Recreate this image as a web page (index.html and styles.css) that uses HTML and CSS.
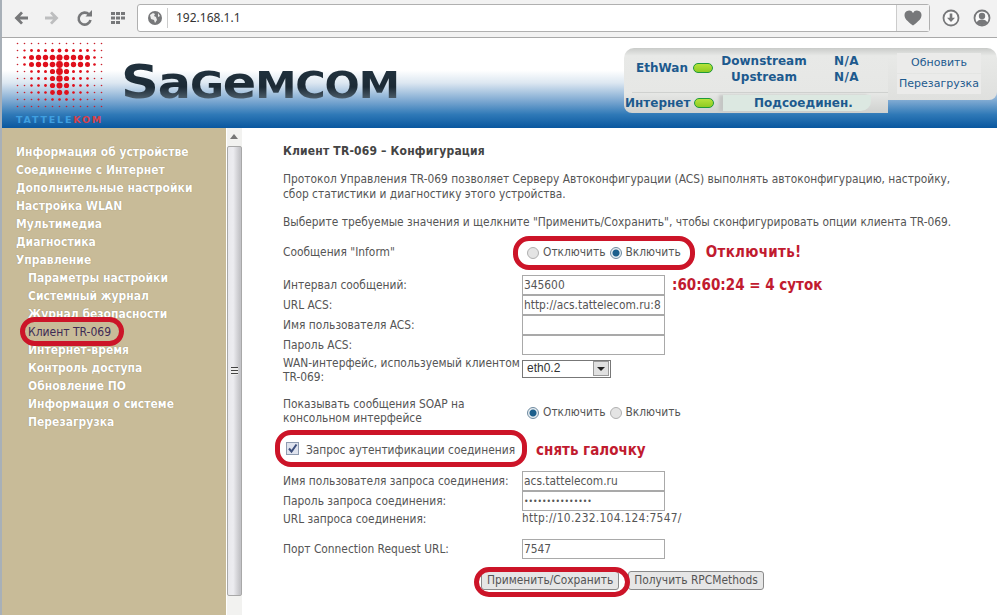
FILE: index.html
```html
<!DOCTYPE html>
<html lang="ru">
<head>
    <meta charset="UTF-8">
    <meta name="viewport" content="width=device-width, initial-scale=1.0">
    <title>Клиент TR-069</title>
    <link rel="stylesheet" href="styles.css">
</head>
<body>
    <div class="toolbar">
        <svg class="nav-icon nav-back" width="20" height="20" viewBox="0 0 20 20"><path d="M16 8.500H8l3-3.200L9 3.500 2.500 10 9 16.500l2-1.800-3-3.200h8z" fill="#77787a"/></svg>
        <svg class="nav-icon" width="20" height="20" viewBox="0 0 20 20"><path d="M3 8.500h8L8 5.300l2-1.800 6.500 6.500-6.500 6.500-2-1.800 3-3.200H3z" fill="#bdbebf"/></svg>
        <svg class="nav-icon" width="20" height="20" viewBox="0 0 20 20"><path d="M14 6.500A6 6 0 1 0 15.500 12" fill="none" stroke="#77787a" stroke-width="2.600"/><path d="M10.500 8.500h6.500V2z" fill="#77787a"/></svg>
        <svg class="nav-icon" width="20" height="20" viewBox="0 0 20 20"><path d="M3 4h4v3H3zM8 4h4v3H8zM13 4h4v3h-4zM3 8.500h4v3H3zM8 8.500h4v3H8zM13 8.500h4v3h-4zM3 13h4v3H3zM8 13h4v3H8z" fill="#77787a"/></svg>
        <div class="address">
            <svg class="globe" width="16" height="16" viewBox="0 0 16 16"><circle cx="8" cy="8" r="7" fill="#77787a"/><path d="M3 5l3-2 2 1-1 2 2 1 1 3-2 3-1-3-3-1zM11 3l2 3-2 1z" fill="#eee"/></svg>
            <span class="url">192.168.1.1</span>
            <span class="star">
                <svg width="18" height="16" viewBox="0 0 18 16"><path d="M9 15.500C3 11 .5 8.500.5 5A4.500 4.500 0 0 1 9 3a4.500 4.500 0 0 1 8.500 2c0 3.500-2.500 6-8.500 10.500z" fill="#77787a"/></svg>
            </span>
        </div>
        <svg class="tool-icon tool-first" width="18" height="18" viewBox="0 0 18 18"><circle cx="9" cy="9" r="7.500" fill="#fafafa" stroke="#77787a" stroke-width="1.800"/><path d="M7.700 4.500h2.600v4.200H13L9 13 5 8.700h2.700z" fill="#77787a"/></svg>
        <svg class="tool-icon" width="18" height="18" viewBox="0 0 18 18"><circle cx="9" cy="9" r="7.500" fill="#fafafa" stroke="#77787a" stroke-width="1.800"/><circle cx="9" cy="7" r="3.200" fill="#77787a"/><path d="M3.500 14c1-3 3-3.500 5.500-3.500s4.500.5 5.500 3.500A7 7 0 0 1 9 16a7 7 0 0 1-5.500-2z" fill="#77787a"/></svg>
    </div>

    <div class="header">
        <div class="logo">
            <svg width="90" height="68" viewBox="0 0 90 68">
                <defs>
                    <pattern id="dots" width="7" height="7" patternUnits="userSpaceOnUse"><circle cx="1.500" cy="1.500" r="0.800" fill="#c8202c"/></pattern>
                </defs>
                <rect width="90" height="68" fill="url(#dots)"/>
                <g fill="#e0101c">
                    <circle cx="15.500" cy="8.500" r="1.400"/><circle cx="22.500" cy="8.500" r="1.500"/><circle cx="29.500" cy="8.500" r="1.500"/><circle cx="36.500" cy="8.500" r="1.700"/><circle cx="43.500" cy="8.500" r="1.900"/><circle cx="50.500" cy="8.500" r="1.700"/><circle cx="57.500" cy="8.500" r="1.500"/><circle cx="64.500" cy="8.500" r="1.500"/><circle cx="71.500" cy="8.500" r="1.400"/><circle cx="8.500" cy="8.500" r="1.100"/><circle cx="78.500" cy="8.500" r="1.100"/>
                    <circle cx="15.500" cy="15.500" r="2.500"/><circle cx="22.500" cy="15.500" r="2.700"/><circle cx="29.500" cy="15.500" r="2.700"/><circle cx="36.500" cy="15.500" r="2.800"/><circle cx="43.500" cy="15.500" r="3.100"/><circle cx="50.500" cy="15.500" r="2.800"/><circle cx="57.500" cy="15.500" r="2.700"/><circle cx="64.500" cy="15.500" r="2.700"/><circle cx="71.500" cy="15.500" r="2.500"/><circle cx="8.500" cy="15.500" r="1.300"/><circle cx="78.500" cy="15.500" r="1.300"/>
                    <circle cx="15.500" cy="22.500" r="2.500"/><circle cx="22.500" cy="22.500" r="2.700"/><circle cx="29.500" cy="22.500" r="2.700"/><circle cx="36.500" cy="22.500" r="2.800"/><circle cx="43.500" cy="22.500" r="3.400"/><circle cx="50.500" cy="22.500" r="2.800"/><circle cx="57.500" cy="22.500" r="2.700"/><circle cx="64.500" cy="22.500" r="2.700"/><circle cx="71.500" cy="22.500" r="2.500"/><circle cx="8.500" cy="22.500" r="1.300"/><circle cx="78.500" cy="22.500" r="1.300"/>
                    <circle cx="15.500" cy="29.500" r="1.300"/><circle cx="22.500" cy="29.500" r="1.400"/><circle cx="29.500" cy="29.500" r="1.500"/><circle cx="36.500" cy="29.500" r="2.600"/><circle cx="43.500" cy="29.500" r="3.400"/><circle cx="50.500" cy="29.500" r="2.600"/><circle cx="57.500" cy="29.500" r="1.500"/><circle cx="64.500" cy="29.500" r="1.400"/><circle cx="71.500" cy="29.500" r="1.300"/>
                    <circle cx="15.500" cy="36.500" r="1.300"/><circle cx="22.500" cy="36.500" r="1.400"/><circle cx="29.500" cy="36.500" r="1.500"/><circle cx="36.500" cy="36.500" r="2.600"/><circle cx="43.500" cy="36.500" r="3.200"/><circle cx="50.500" cy="36.500" r="2.600"/><circle cx="57.500" cy="36.500" r="1.500"/><circle cx="64.500" cy="36.500" r="1.400"/><circle cx="71.500" cy="36.500" r="1.300"/>
                    <circle cx="15.500" cy="43.500" r="1.200"/><circle cx="22.500" cy="43.500" r="1.300"/><circle cx="29.500" cy="43.500" r="1.400"/><circle cx="36.500" cy="43.500" r="2.600"/><circle cx="43.500" cy="43.500" r="3"/><circle cx="50.500" cy="43.500" r="2.600"/><circle cx="57.500" cy="43.500" r="1.400"/><circle cx="64.500" cy="43.500" r="1.300"/><circle cx="71.500" cy="43.500" r="1.200"/>
                    <circle cx="15.500" cy="50.500" r="1.100"/><circle cx="22.500" cy="50.500" r="1.200"/><circle cx="29.500" cy="50.500" r="1.300"/><circle cx="36.500" cy="50.500" r="2.400"/><circle cx="43.500" cy="50.500" r="2.700"/><circle cx="50.500" cy="50.500" r="2.400"/><circle cx="57.500" cy="50.500" r="1.300"/><circle cx="64.500" cy="50.500" r="1.200"/><circle cx="71.500" cy="50.500" r="1.100"/>
                    <circle cx="22.500" cy="57.500" r="1"/><circle cx="29.500" cy="57.500" r="1"/><circle cx="36.500" cy="57.500" r="1.300"/><circle cx="43.500" cy="57.500" r="1.300"/><circle cx="50.500" cy="57.500" r="1.300"/><circle cx="57.500" cy="57.500" r="1"/><circle cx="64.500" cy="57.500" r="1"/>
                </g>
            </svg>
            <div class="brand-small">TATTELE<span class="brand-kom">KOM</span></div>
        </div>
        <div class="wordmark"><span class="wm-s">S</span><span class="wm-low">a</span>G<span class="wm-low">e</span>MCOM</div>

        <div class="status">
            <div class="status-left">
                <div class="status-top">
                    <div class="eth">EthWan <span class="led"></span></div>
                    <div class="streams">
                        <div>Downstream</div>
                        <div>Upstream</div>
                    </div>
                    <div class="na">
                        <div>N/A</div>
                        <div>N/A</div>
                    </div>
                </div>
                <div class="status-bottom">
                    <div class="inet">Интернет <span class="led"></span></div>
                    <div class="connected">Подсоединен.</div>
                </div>
            </div>
            <div class="status-right">
                <div class="status-btn">Обновить</div>
                <div class="status-btn">Перезагрузка</div>
            </div>
        </div>
    </div>

    <div class="main">
        <div class="sidebar">
            <a href="#">Информация об устройстве</a>
            <a href="#">Соединение с Интернет</a>
            <a href="#">Дополнительные настройки</a>
            <a href="#">Настройка WLAN</a>
            <a href="#">Мультимедиа</a>
            <a href="#">Диагностика</a>
            <a href="#">Управление</a>
            <a class="sub" href="#">Параметры настройки</a>
            <a class="sub" href="#">Системный журнал</a>
            <a class="sub" href="#">Журнал безопасности</a>
            <a class="sub active" href="#">Клиент TR-069</a>
            <a class="sub" href="#">Интернет-время</a>
            <a class="sub" href="#">Контроль доступа</a>
            <a class="sub" href="#">Обновление ПО</a>
            <a class="sub" href="#">Информация о системе</a>
            <a class="sub" href="#">Перезагрузка</a>
            <div class="oval oval-menu"></div>
        </div>

        <div class="scrollbar">
            <div class="scroll-up"></div>
            <div class="scroll-thumb"><div class="grip"></div></div>
            <div class="scroll-down"></div>
        </div>

        <div class="content">
            <h1>Клиент TR-069 – Конфигурация</h1>
            <p class="intro">Протокол Управления TR-069 позволяет Серверу Автоконфигурации (ACS) выполнять автоконфигурацию, настройку, сбор статистики и диагностику этого устройства.</p>
            <p class="hint">Выберите требуемые значения и щелкните "Применить/Сохранить", чтобы сконфигурировать опции клиента TR-069.</p>

            <form>
                <div class="row row-inform">
                    <label>Сообщения "Inform"</label>
                    <div class="radios">
                        <span class="radio"></span> Отключить <span class="radio on"></span> Включить
                    </div>
                    <span class="note note-off">Отключить!</span>
                </div>

                <div class="row row-input">
                    <label>Интервал сообщений:</label>
                    <input type="text" value="345600">
                    <span class="note note-time">:60:60:24 = 4 суток</span>
                </div>
                <div class="row row-input">
                    <label>URL ACS:</label>
                    <input type="text" value="http://acs.tattelecom.ru:8">
                </div>
                <div class="row row-input">
                    <label>Имя пользователя ACS:</label>
                    <input type="text">
                </div>
                <div class="row row-input">
                    <label>Пароль ACS:</label>
                    <input type="text">
                </div>
                <div class="row row-wan">
                    <label>WAN-интерфейс, используемый клиентом<br>TR-069:</label>
                    <div class="select">eth0.2<span class="select-arrow"></span></div>
                </div>
                <div class="row row-soap">
                    <label>Показывать сообщения SOAP на консольном интерфейсе</label>
                    <div class="radios">
                        <span class="radio on"></span> Отключить <span class="radio"></span> Включить
                    </div>
                </div>
                <div class="row row-check">
                    <span class="checkbox">
                        <svg width="11" height="11" viewBox="0 0 11 11"><path d="M2 5.500l2.500 3L9.500 1.500" fill="none" stroke="#3d4f7c" stroke-width="2"/></svg>
                    </span>
                    <span class="check-label">Запрос аутентификации соединения</span>
                    <span class="note note-check">снять галочку</span>
                </div>
                <div class="row row-input">
                    <label>Имя пользователя запроса соединения:</label>
                    <input type="text" value="acs.tattelecom.ru">
                </div>
                <div class="row row-input">
                    <label>Пароль запроса соединения:</label>
                    <input class="pass" type="password" value="passwordpasswor">
                </div>
                <div class="row row-url">
                    <label>URL запроса соединения:</label>
                    <span class="url-value">http://10.232.104.124:7547/</span>
                </div>
                <div class="row row-port">
                    <label>Порт Connection Request URL:</label>
                    <input type="text" value="7547">
                </div>
                <div class="buttons">
                    <button type="button">Применить/Сохранить</button>
                    <button type="button" class="btn-rpc">Получить RPCMethods</button>
                </div>
            </form>

            <div class="oval oval-inform"></div>
            <div class="oval oval-check"></div>
            <div class="oval oval-save"></div>
        </div>
    </div>
</body>
</html>
```

FILE: styles.css
```css
* {
    box-sizing: border-box;
}

html, body {
    margin: 0;
    height: 615px;
    overflow: hidden;
    background: #fff;
}

body {
    font-family: "DejaVu Sans Condensed", "DejaVu Sans", sans-serif;
    font-stretch: condensed;
    font-size: 11.850px;
    color: #555;
}

/* browser chrome */
.toolbar {
    display: flex;
    align-items: center;
    height: 38px;
    padding: 0 5px 1px 10px;
    background: #f2f2f2;
    border-bottom: 1px solid #a9a9a9;
    border-left: 2px solid #a8b0b8;
}

.nav-icon {
    margin-right: 13px;
}

.nav-back {
    margin-right: 10px;
}

.address {
    display: flex;
    align-items: center;
    width: 793px;
    height: 28px;
    margin-left: -4px;
    background: #fff;
    border: 1px solid #b0b0b0;
    border-radius: 3px;
}

.globe {
    margin-left: 9px;
}

.url {
    flex: 1;
    margin-left: 4px;
    padding-left: 8px;
    border-left: 1px solid #ccc;
    font-family: "Noto Sans", sans-serif;
    font-stretch: normal;
    font-size: 12px;
    line-height: 20px;
    color: #333;
}

.star {
    display: flex;
    align-items: center;
    justify-content: center;
    width: 33px;
    height: 26px;
    background: #f4f4f4;
    border-left: 1px solid #ccc;
}

.tool-icon {
    margin-left: 13px;
}

.tool-first {
    margin-left: 12px;
}

/* router header */
.header {
    display: flex;
    height: 90px;
    padding-left: 14px;
    background: linear-gradient(#fff 0%, #fff 36%, #dce7f1 50%, #7ca8d1 70%, #2f79b7 85%, #09579f 100%);
    border-left: 2px solid #a8b0b8;
}

.logo {
    width: 90px;
    padding-top: 4px;
}

.logo svg {
    display: block;
}

.brand-small {
    margin-top: 5px;
    font-family: "DejaVu Sans", sans-serif;
    font-stretch: normal;
    font-size: 9.500px;
    font-weight: bold;
    line-height: 10px;
    letter-spacing: 1.800px;
    white-space: nowrap;
    color: #3f9fe0;
}

.brand-kom {
    color: #d8404a;
}

.wordmark {
    height: 50px;
    margin: 19px 0 0 15px;
    font-family: "DejaVu Sans", sans-serif;
    font-stretch: normal;
    font-weight: bold;
    font-size: 37px;
    line-height: 50px;
    letter-spacing: -1px;
    white-space: nowrap;
    transform: scaleX(1.12);
    transform-origin: left;
    background: linear-gradient(#20303c 30%, #1c2a35 60%, #5a6c7a 90%);
    -webkit-background-clip: text;
    background-clip: text;
    color: transparent;
}

.wm-s {
    font-size: 47px;
}

.wm-low {
    font-size: 44px;
}

.status {
    display: flex;
    align-items: flex-start;
    margin: 10px 0 0 auto;
    font-family: "DejaVu Sans", sans-serif;
    font-stretch: normal;
    font-weight: bold;
    font-size: 12px;
    color: #1d5a8e;
}

.status-left {
    width: 264px;
    height: 65px;
    padding-top: 4px;
    background: linear-gradient(#c9cbc9, #e8e9e7 12%, #e6e7e5 70%, #cfd1cf);
    border-radius: 10px 0 0 8px;
}

.status-top {
    display: flex;
    height: 41px;
    margin-left: 8px;
    border-bottom: 1px solid #cfd1cf;
}

.eth {
    width: 82px;
    padding: 9px 0 0 4px;
    white-space: nowrap;
}

.streams {
    width: 106px;
    margin-left: -3px;
    padding-top: 1px;
    line-height: 16px;
    text-align: center;
    white-space: nowrap;
}

.na {
    margin-left: 17px;
    padding-top: 1px;
    line-height: 16px;
    letter-spacing: 0.400px;
}

.status-bottom {
    display: flex;
    align-items: center;
    height: 19px;
}

.inet {
    width: 98px;
    margin-left: 1px;
    white-space: nowrap;
}

.inet .led {
    margin-left: -1px;
}

.connected {
    width: 148px;
    height: 16px;
    padding-left: 31px;
    background: #dce8e1;
    border-radius: 0 0 10px 0;
    box-shadow: -4px 0 3px #c4c6c4;
    line-height: 16px;
    white-space: nowrap;
}

.led {
    display: inline-block;
    width: 20px;
    height: 10px;
    margin-left: 1px;
    vertical-align: -1px;
    background: linear-gradient(#b6e23a, #8ecb22);
    border: 1px solid #1f9a3a;
    border-radius: 5px;
}

.status-right {
    width: 109px;
    height: 52px;
    padding: 5px 0 0 9px;
    background: linear-gradient(#c9cbc9, #e8e9e7 15%, #dfe0de);
    border-radius: 0 10px 8px 0;
    font-weight: normal;
}

.status-btn {
    width: 84px;
    height: 20px;
    margin-bottom: 1px;
    background: #ebebea;
    font-size: 11px;
    line-height: 20px;
    text-align: center;
    white-space: nowrap;
}

/* page body */
.main {
    display: flex;
    height: 487px;
}

.sidebar {
    position: relative;
    width: 226px;
    padding: 15px 0 0 14px;
    background: #c8bb98;
    border-left: 2px solid #a8b0b8;
}

.sidebar a {
    display: block;
    height: 18px;
    font-size: 12px;
    font-weight: bold;
    line-height: 18px;
    color: #fff;
    text-decoration: none;
    white-space: nowrap;
    text-shadow: 0 0 1px #8a7f60;
}

.sidebar a.sub {
    margin-left: 12px;
}

.sidebar a.active {
    font-weight: normal;
    color: #3d2a55;
    text-shadow: none;
}

.scrollbar {
    display: flex;
    flex-direction: column;
    width: 16px;
    background: #f2f2f0;
    border-left: 1px solid #fff;
}

.scroll-up {
    position: relative;
    height: 18px;
}

.scroll-up::after {
    content: "";
    position: absolute;
    left: 3px;
    top: 6px;
    border: 4px solid transparent;
    border-top: 0;
    border-bottom: 5px solid #777;
}

.scroll-thumb {
    display: flex;
    flex: 1;
    align-items: center;
    justify-content: center;
    background: linear-gradient(90deg, #e8e8ec, #ececf0 40%, #c4c4c8 90%);
    border: 1px solid #a8a8a8;
    border-radius: 2px;
}

.grip {
    width: 7px;
    height: 8px;
    background: repeating-linear-gradient(#444 0, #444 1px, #eee 1px, #eee 3px);
}

.scroll-down {
    height: 19px;
}

.content {
    position: relative;
    flex: 1;
    padding: 16px 30px 0 41px;
    line-height: 15px;
}

h1 {
    margin: 0;
    font-size: 12px;
    line-height: 15px;
    font-weight: bold;
    letter-spacing: 0.180px;
    color: #444;
}

.intro,
.hint {
    margin: 13px 0 0;
}

.row {
    display: flex;
    align-items: center;
}

.row label {
    flex: none;
    width: 239px;
    line-height: 14px;
}

.row-inform {
    height: 20px;
    margin-top: 11px;
}

.row-inform label {
    margin-top: 1px;
}

.row-input {
    height: 20px;
}

.row-inform + .row-input {
    margin-top: 14px;
}

input {
    width: 143px;
    height: 20px;
    padding: 0 1px;
    margin: 0;
    border: 1px solid #a9a9a9;
    font-family: "DejaVu Sans Condensed", "DejaVu Sans", sans-serif;
    font-stretch: condensed;
    font-size: 11.850px;
    color: #555;
    background: #fff;
    outline: none;
}

input.pass {
    font-size: 8.500px;
}

.row-wan {
    height: 30px;
}

.row-wan label {
    white-space: nowrap;
}

.select {
    display: flex;
    align-items: center;
    justify-content: space-between;
    width: 89px;
    height: 18px;
    padding: 0 1px 0 4px;
    margin-bottom: 3px;
    border: 1px solid #777;
    font-family: "Liberation Sans", sans-serif;
    font-stretch: normal;
    font-size: 12px;
    color: #333;
}

.select-arrow {
    position: relative;
    width: 16px;
    height: 15px;
    background: #e0e0e0;
    border: 1px solid #999;
}

.select-arrow::after {
    content: "";
    position: absolute;
    left: 3px;
    top: 5px;
    border: 4px solid transparent;
    border-bottom: 0;
    border-top: 4px solid #222;
}

.row-soap {
    height: 30px;
    margin-top: 11px;
}

.radios {
    display: flex;
    align-items: center;
    gap: 4px;
    margin: 3px 0 0 5px;
    white-space: nowrap;
}

.radio {
    display: inline-block;
    width: 12px;
    height: 12px;
    background: #e4e4e4;
    border: 1px solid #b0b0b0;
    border-radius: 50%;
}

.radio.on {
    background: radial-gradient(circle, #1d5f8c 0, #1d5f8c 3px, #e8eef2 4px);
    border-color: #6e8aa0;
}

.row-check {
    height: 20px;
    margin-top: 14px;
    padding-left: 3px;
}

.checkbox {
    display: flex;
    align-items: center;
    justify-content: center;
    width: 13px;
    height: 13px;
    margin-bottom: 3px;
    background: #dfe3ee;
    border: 1px solid #8e9bb0;
}

.check-label {
    margin-left: 7px;
    white-space: nowrap;
}

.row-check + .row-input {
    margin-top: 11px;
}

.row-url {
    height: 15px;
}

.url-value {
    letter-spacing: 0.300px;
}

.row-port {
    height: 20px;
    margin-top: 13px;
}

.buttons {
    display: flex;
    gap: 9px;
    margin: 12px 0 0 198px;
}

button {
    height: 19px;
    padding: 0 5px;
    background: #e6e6e6;
    border: 1px solid #8a8a8a;
    border-radius: 3px;
    font-family: "DejaVu Sans Condensed", "DejaVu Sans", sans-serif;
    font-stretch: condensed;
    font-size: 11.850px;
    line-height: 15px;
    color: #555;
    white-space: nowrap;
}

.note {
    font-weight: bold;
    font-size: 15px;
    color: #c11b2f;
    white-space: nowrap;
}

.note-off {
    margin: 2px 0 0 25px;
    letter-spacing: 0.300px;
}

.note-time {
    margin-left: 7px;
}

.note-check {
    margin-left: 21px;
}

/* red marker drawn over the screenshot */
.oval {
    position: absolute;
    border: 5px solid #cc1428;
    border-radius: 16px;
}

.oval-menu {
    left: 18px;
    top: 189px;
    width: 104px;
    height: 29px;
}

.oval-inform {
    left: 271px;
    top: 108px;
    width: 182px;
    height: 34px;
}

.oval-check {
    left: 33px;
    top: 302px;
    width: 252px;
    height: 37px;
}

.oval-save {
    left: 232px;
    top: 439px;
    width: 156px;
    height: 30px;
}
```
